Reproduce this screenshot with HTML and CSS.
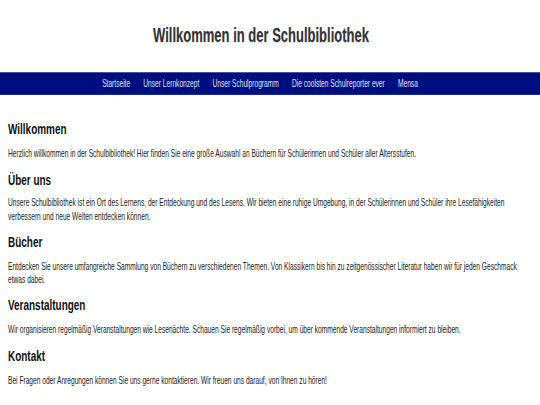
FILE: index.html
```html
<!DOCTYPE html>
<html lang="de">
<head>
<meta charset="utf-8">
<title>Schulbibliothek</title>
<link rel="stylesheet" href="styles.css">
</head>
<body>
<div class="page">
  <header class="site-header">
    <h1 class="site-title">Willkommen in der Schulbibliothek</h1>
  </header>
  <nav class="main-nav">
    <ul class="nav-list">
      <li><a href="#" class="nav-link">Startseite</a></li>
      <li><a href="#" class="nav-link">Unser Lernkonzept</a></li>
      <li><a href="#" class="nav-link">Unser Schulprogramm</a></li>
      <li><a href="#" class="nav-link">Die coolsten Schulreporter ever</a></li>
      <li><a href="#" class="nav-link">Mensa</a></li>
    </ul>
  </nav>
  <main class="content">
    <section class="section">
      <h2 class="section-title">Willkommen</h2>
      <p class="section-text">Herzlich willkommen in der Schulbibliothek! Hier finden Sie eine große Auswahl an Büchern für Schülerinnen und Schüler aller Altersstufen.</p>
    </section>
    <section class="section">
      <h2 class="section-title">Über uns</h2>
      <p class="section-text">Unsere Schulbibliothek ist ein Ort des Lernens, der Entdeckung und des Lesens. Wir bieten eine ruhige Umgebung, in der Schülerinnen und Schüler ihre Lesefähigkeiten verbessern und neue Welten entdecken können.</p>
    </section>
    <section class="section">
      <h2 class="section-title">Bücher</h2>
      <p class="section-text">Entdecken Sie unsere umfangreiche Sammlung von Büchern zu verschiedenen Themen. Von Klassikern bis hin zu zeitgenössischer Literatur haben wir für jeden Geschmack etwas dabei.</p>
    </section>
    <section class="section">
      <h2 class="section-title">Veranstaltungen</h2>
      <p class="section-text">Wir organisieren regelmäßig Veranstaltungen wie Lesenächte. Schauen Sie regelmäßig vorbei, um über kommende Veranstaltungen informiert zu bleiben.</p>
    </section>
    <section class="section">
      <h2 class="section-title">Kontakt</h2>
      <p class="section-text">Bei Fragen oder Anregungen können Sie uns gerne kontaktieren. Wir freuen uns darauf, von Ihnen zu hören!</p>
    </section>
  </main>
</div>
</body>
</html>
```
FILE: styles.css
```css
html, body {
  margin: 0;
  padding: 0;
  background: #ffffff;
}

body {
  min-height: 405px;
  font-family: "Liberation Sans", Arial, sans-serif;
  color: #333333;
}

/* the reference is a horizontally squeezed capture: lay out at the
   squeezed width, then stretch the page vertically back to full height */
.page {
  width: 540px;
  transform: scaleY(1.506);
  transform-origin: 0 0;
}

.site-header {
  padding: 16.6px 18px 16.6px 0;
  text-align: center;
}

.site-title {
  margin: 0;
  font-size: 13px;
  line-height: 14.61px;
  font-weight: bold;
  color: #333333;
  text-shadow: 0 0.6px 0.8px rgba(0, 0, 0, 0.15);
}

.main-nav {
  background: #000f80;
  height: 15.27px;
}

.nav-list {
  list-style: none;
  margin: 0;
  padding: 0 20px 0 0;
  display: flex;
  justify-content: center;
}

.nav-link {
  display: block;
  padding: 0 6.6px;
  font-size: 6.64px;
  line-height: 15.27px;
  color: #dfe0f5;
  text-decoration: none;
}

.content {
  padding: 9.63px 18px 0 8px;
}

.section-title {
  margin: 7.3px 0 6.64px;
  font-size: 9.96px;
  line-height: 11.29px;
  font-weight: bold;
  color: #111111;
}

.section-text {
  margin: 0;
  font-size: 6.64px;
  line-height: 8.3px;
  color: #222222;
}
```
